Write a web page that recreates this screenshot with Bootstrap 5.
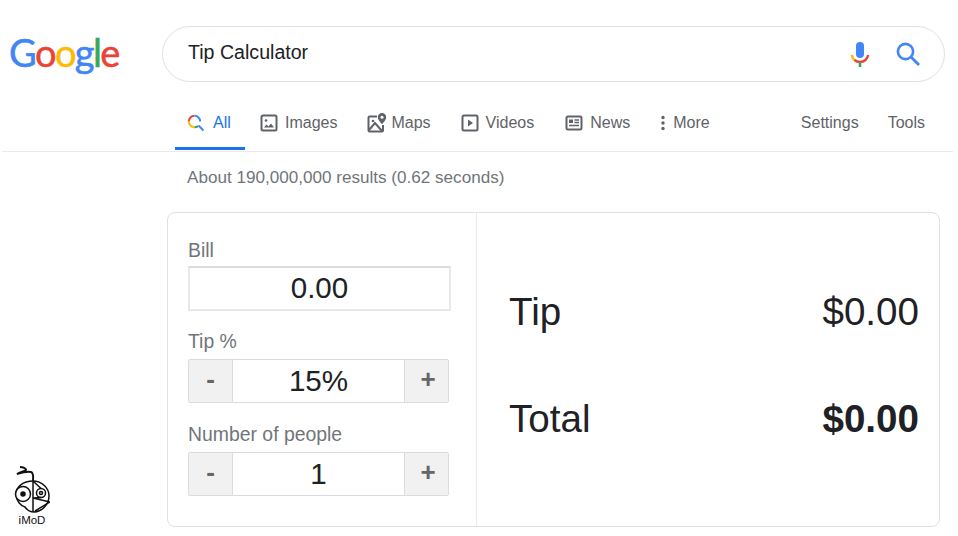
<!DOCTYPE html>
<html lang="en">
<head>
<meta charset="utf-8">
<title>Tip Calculator</title>
<link href="https://cdn.jsdelivr.net/npm/bootstrap@5.3.0/dist/css/bootstrap.min.css" rel="stylesheet">
<style>
html,body{height:536px;overflow:hidden;background:#fff;}
body{font-family:"Liberation Sans",Arial,sans-serif;color:#202124;position:relative;}
.top-head{padding:26px 13px 0 9px;height:100px;}
.logo-word{width:153px;font-family:"Lato",sans-serif;font-size:38px;line-height:52px;letter-spacing:-1.6px;font-weight:400;height:56px;-webkit-text-stroke:.5px currentColor;}
.gb{color:#4285f4}.gr{color:#ea4335}.gy{color:#fbbc05}.gg{color:#34a853}
.search-pill{height:56px;flex:1;border:1px solid #dfe1e5;border-radius:28px;padding:0 22px 0 25px;font-size:19.6px;}
.query-txt{margin-top:-2px;}
.search-ico{width:28px;height:28px;margin-left:20px;}
.tab-strip{height:52px;margin:0 5px 0 2px;border-bottom:1px solid #ebebeb;padding-left:173px;padding-right:28px;font-size:16px;color:#5f6368;}
.tab-item{height:50px;display:flex;align-items:center;gap:7px;border-bottom:3px solid transparent;padding-bottom:2px;}
.tab-item svg{flex:none;}
.tab-item.on{color:#1a73e8;border-bottom-color:#1a73e8;width:70px;padding-left:12px;margin-right:15px;gap:8px;}
.tab-m{margin-right:30px;}
.tab-map{gap:4px;margin-right:30px;}
.tab-vid{margin-right:31px;}
.tab-more{gap:7px;}
.tab-set{margin-right:29px;}
.stats{padding:15px 0 0 187px;font-size:17.1px;line-height:22px;color:#70757a;height:60px;}
.tip-box{margin-left:167px;width:773px;height:315px;border:1px solid #dfe1e5;border-radius:8px;}
.tip-left{width:309px;border-right:1px solid #ebebeb;padding:25px 0 0 20px;}
.fld-label{font-size:19.4px;line-height:24px;color:#70757a;margin-bottom:6px;}
.fld-label.first{margin-bottom:4px;}
.bill-box{width:263px;height:45px;border:2px solid #e8e8e8;border-top-color:#dcdcdc;font-size:29.6px;line-height:40px;text-align:center;margin-bottom:18px;color:#202124;}
.stepper{width:261px;height:44px;border:1px solid #dcdcdc;border-radius:2px;margin-bottom:19px;}
.step-btn{width:44px;background:#f1f1f1;color:#666;font-size:26px;font-weight:700;line-height:39px;text-align:center;}
.step-btn.l{border-right:1px solid #dcdcdc;}
.step-btn.r{border-left:1px solid #dcdcdc;padding-left:3px;}
.step-val{flex:1;text-align:center;font-size:29.6px;line-height:41px;color:#202124;}
.tip-right{flex:1;padding:0 20px 9px 32px;font-size:38.6px;color:#202124;line-height:46px;}
.res-row+.res-row{margin-top:61px;}
.imod{position:absolute;left:14px;top:465px;width:36px;text-align:center;line-height:1;}
.imod svg{display:block;}
.imod span{display:block;font-size:11.5px;color:#111;margin-top:1px;}
</style>
</head>
<body>
<header class="top-head d-flex align-items-start">
  <div class="logo-word"><span class="gb">G</span><span class="gr">o</span><span class="gy">o</span><span class="gb">g</span><span class="gg">l</span><span class="gr">e</span></div>
  <div class="search-pill d-flex align-items-center">
    <div class="flex-grow-1 query-txt">Tip Calculator</div>
    <svg class="search-ico" viewBox="0 0 28 28" aria-label="Voice search">
      <rect x="10" y="2" width="8" height="16" rx="4" fill="#4285f4"/>
      <path d="M6 15a8 7.5 0 0 0 3 5.500" fill="none" stroke="#fbbc05" stroke-width="2.400"/>
      <path d="M8.500 20a8 7 0 0 0 11 0a8 7.500 0 0 0 2.500-5" fill="none" stroke="#ea4335" stroke-width="2.400"/>
      <rect x="12.700" y="22.500" width="2.600" height="4.500" fill="#34a853"/>
    </svg>
    <svg class="search-ico" viewBox="0 0 28 28" aria-label="Search">
      <circle cx="11.500" cy="11.500" r="7.600" fill="none" stroke="#4285f4" stroke-width="2.600"/>
      <path d="M17 17l8 8" stroke="#4285f4" stroke-width="2.800"/>
    </svg>
  </div>
</header>
<nav class="tab-strip d-flex align-items-start">
  <div class="tab-item on">
    <svg width="18" height="18" viewBox="0 0 18 18"><path d="M1.800 7.500A5.700 5.700 0 0 1 7.500 1.800" fill="none" stroke="#ea4335" stroke-width="2"/><path d="M7.500 1.800a5.700 5.700 0 0 1 5.700 5.700" fill="none" stroke="#4285f4" stroke-width="2"/><path d="M1.800 7.500a5.700 5.700 0 0 0 5.700 5.700" fill="none" stroke="#fbbc05" stroke-width="2"/><path d="M7.500 13.200a5.700 5.700 0 0 0 3.700-1.300" fill="none" stroke="#34a853" stroke-width="2"/><path d="M11.500 11.500l5 5" stroke="#4285f4" stroke-width="2"/></svg>
    <span>All</span>
  </div>
  <div class="tab-item tab-m">
    <svg width="18" height="18" viewBox="0 0 18 18"><rect x="1.500" y="1.500" width="15" height="15" rx="1.500" fill="none" stroke="#5f6368" stroke-width="2"/><circle cx="6" cy="6.500" r="1.300" fill="#5f6368"/><path d="M4 13.500l2.500-3 2 2 2.500-3 3 4z" fill="#5f6368"/></svg>
    <span>Images</span>
  </div>
  <div class="tab-item tab-map">
    <svg width="20" height="20" viewBox="0 0 20 20"><path d="M10 3.500H2.500a1 1 0 0 0-1 1V17.500a1 1 0 0 0 1 1H15a1 1 0 0 0 1-1V12" fill="none" stroke="#5f6368" stroke-width="2"/><path d="M2 17l6-7 7 8" fill="none" stroke="#5f6368" stroke-width="2"/><circle cx="6" cy="8" r="1.300" fill="#5f6368"/><path d="M15 0a4.200 4.200 0 0 1 4.200 4.200c0 3-4.200 6.800-4.200 6.800s-4.200-3.800-4.200-6.800A4.200 4.200 0 0 1 15 0z" fill="#5f6368"/><circle cx="15" cy="4.200" r="1.500" fill="#fff"/></svg>
    <span>Maps</span>
  </div>
  <div class="tab-item tab-vid">
    <svg width="18" height="18" viewBox="0 0 18 18"><rect x="1.500" y="1.500" width="15" height="15" rx="1.500" fill="none" stroke="#5f6368" stroke-width="2"/><path d="M7 5.500l5 3.500-5 3.500z" fill="#5f6368"/></svg>
    <span>Videos</span>
  </div>
  <div class="tab-item tab-m">
    <svg width="18" height="18" viewBox="0 0 18 18"><rect x="1.500" y="2.500" width="15" height="13" rx="1.500" fill="none" stroke="#5f6368" stroke-width="2"/><rect x="4" y="5.500" width="4" height="3.500" fill="#5f6368"/><path d="M9.500 6h4.500M9.500 8.500h4.500M4 11.500h10" stroke="#5f6368" stroke-width="1.400"/></svg>
    <span>News</span>
  </div>
  <div class="tab-item tab-more">
    <svg width="6" height="18" viewBox="0 0 6 18"><circle cx="3" cy="3.500" r="1.700" fill="#5f6368"/><circle cx="3" cy="9" r="1.700" fill="#5f6368"/><circle cx="3" cy="14.500" r="1.700" fill="#5f6368"/></svg>
    <span>More</span>
  </div>
  <div class="tab-item tab-set ms-auto">Settings</div>
  <div class="tab-item">Tools</div>
</nav>
<div class="stats">About 190,000,000 results (0.62 seconds)</div>
<section class="tip-box d-flex">
  <div class="tip-left">
    <div class="fld-label first">Bill</div>
    <div class="bill-box">0.00</div>
    <div class="fld-label">Tip %</div>
    <div class="stepper d-flex"><div class="step-btn l">-</div><div class="step-val">15%</div><div class="step-btn r">+</div></div>
    <div class="fld-label">Number of people</div>
    <div class="stepper d-flex"><div class="step-btn l">-</div><div class="step-val">1</div><div class="step-btn r">+</div></div>
  </div>
  <div class="tip-right d-flex flex-column justify-content-center">
    <div class="res-row d-flex justify-content-between"><span>Tip</span><span>$0.00</span></div>
    <div class="res-row d-flex justify-content-between"><span>Total</span><span class="fw-bold">$0.00</span></div>
  </div>
</section>
<div class="imod">
  <svg width="36" height="49" viewBox="0 0 36 49" fill="none" stroke="#111" stroke-width="1.500">
    <path d="M6 2c3 0 5 1 6 2.500s-6 2-9 4.500c5-1.500 11-3 14-2s2 5 2 9" stroke-width="1.900"/>
    <path d="M19 16c9 0 16 7 16 15c0 8-7 16-15 16c-4 0-7-2-9-5c-4-1-9-6-9-13c0-7 7-13 17-13z"/>
    <circle cx="9" cy="29" r="7.500" fill="#fff"/>
    <circle cx="9" cy="29" r="2" fill="#111"/>
    <circle cx="27" cy="28" r="4.500"/>
    <circle cx="27" cy="28" r="1.500"/>
    <path d="M19 16v31M19 16l8 7.500M19 33l8-.5M19 33l17 4-15 9"/>
  </svg>
  <span>iMoD</span>
</div>
</body>
</html>
